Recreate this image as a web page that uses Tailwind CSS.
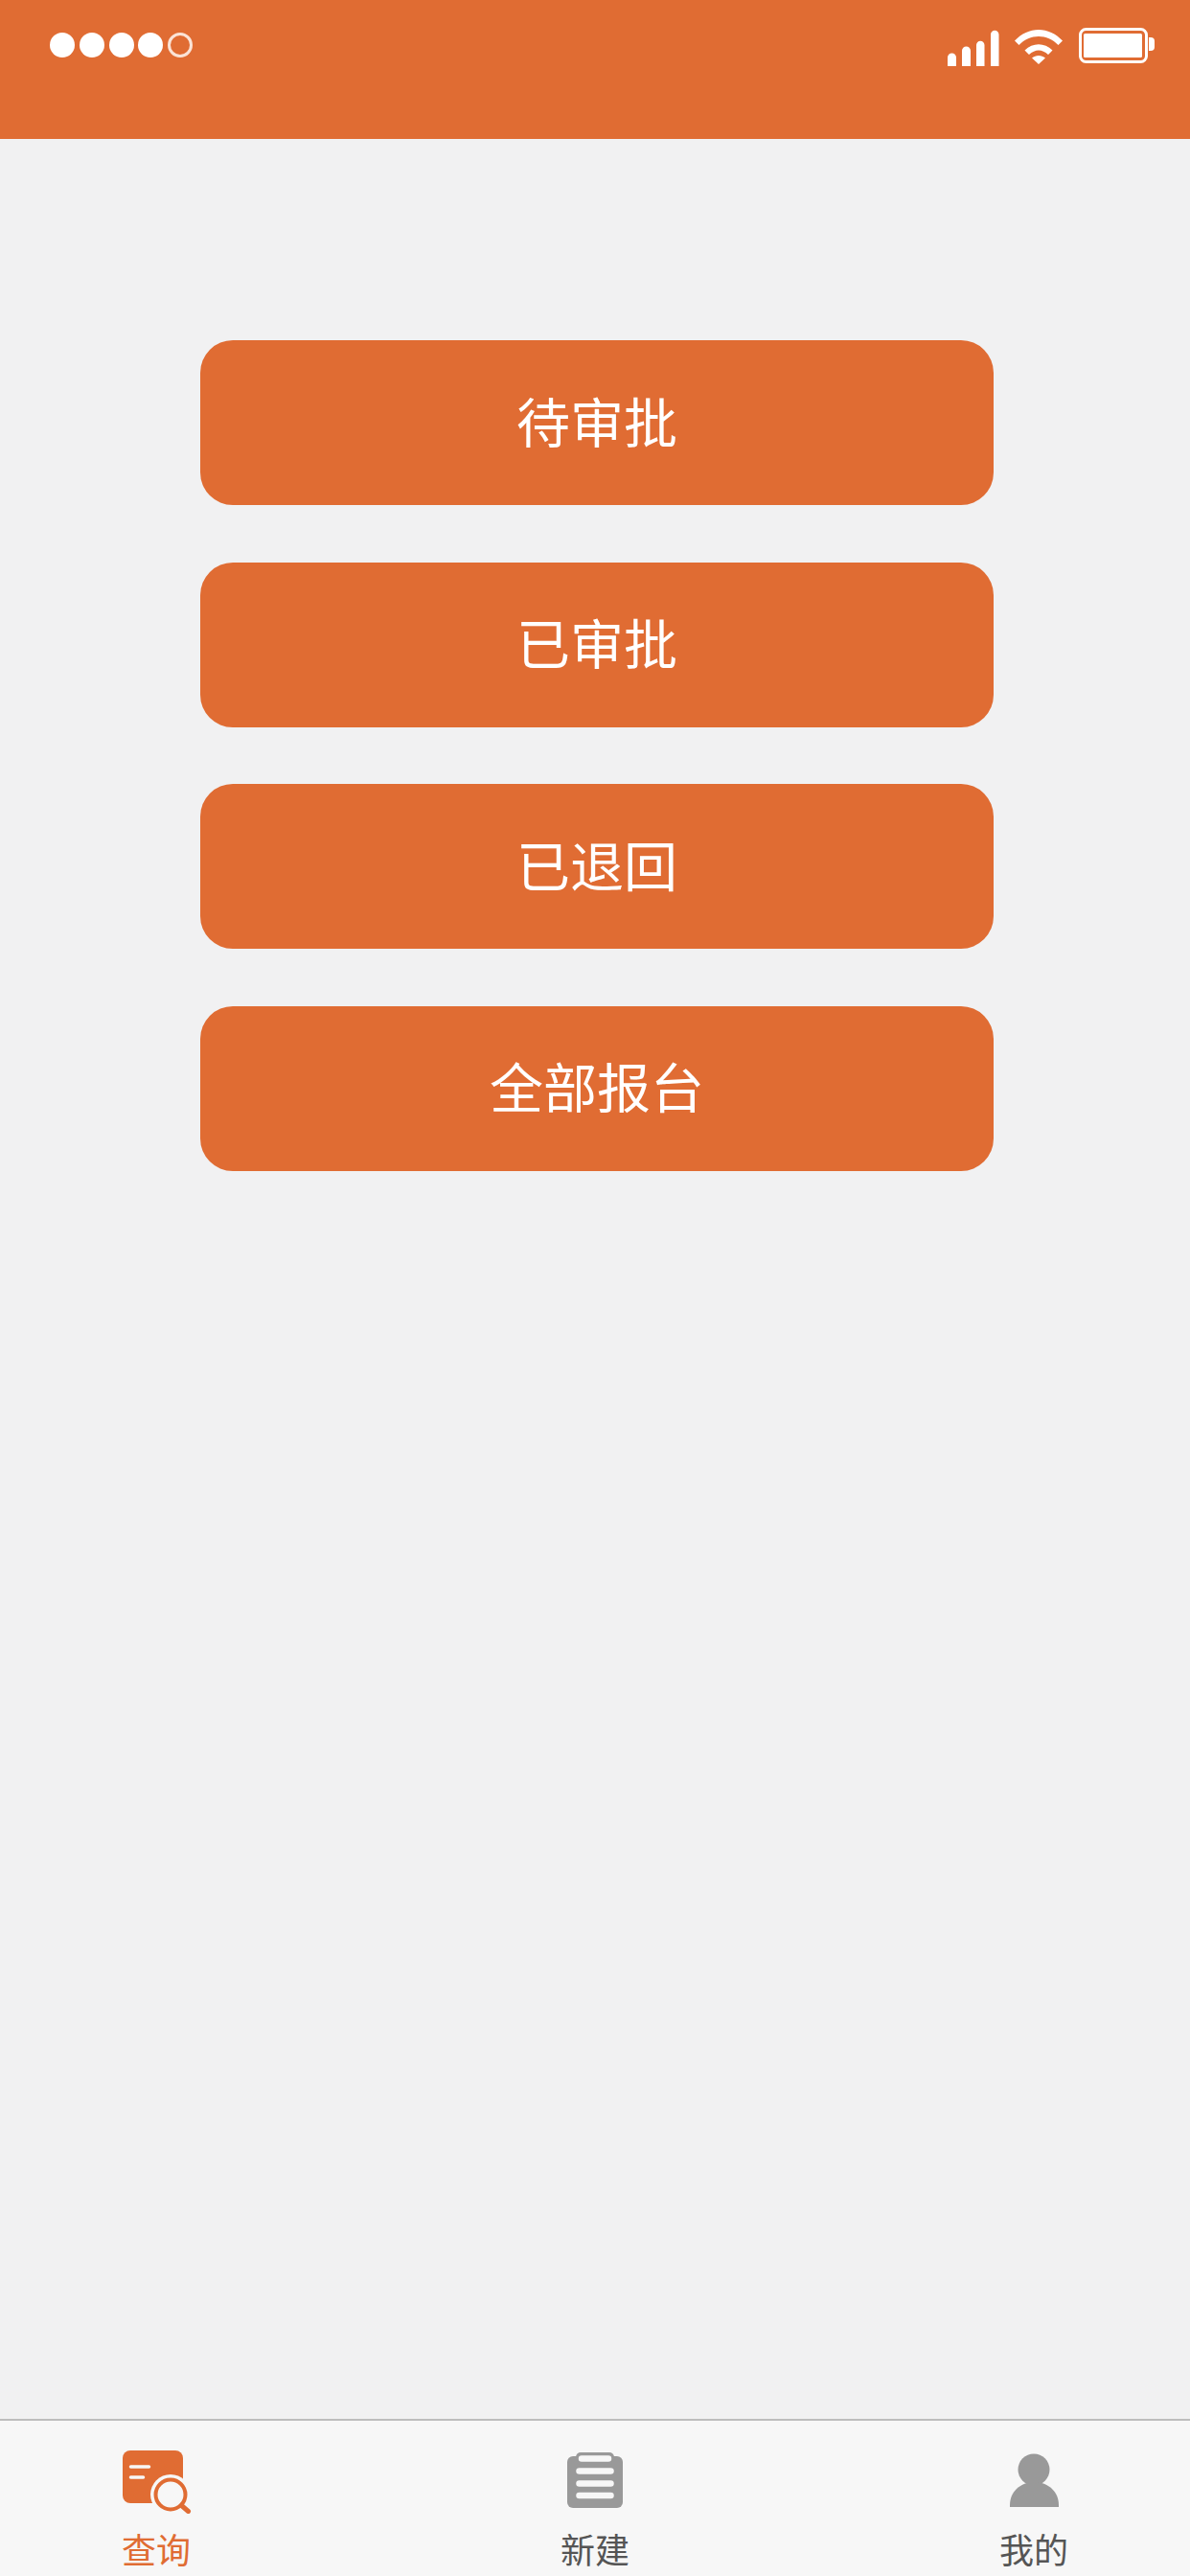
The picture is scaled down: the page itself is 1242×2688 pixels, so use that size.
<!DOCTYPE html>
<html lang="zh">
<head>
<meta charset="utf-8">
<script src="https://cdn.jsdelivr.net/npm/@tailwindcss/browser@4"></script>
</head>
<body class="font-['Noto_Sans_CJK_SC','Liberation_Sans',sans-serif]">
<div class="w-[1242px] h-[2688px] flex flex-col bg-[#f1f1f2] overflow-hidden">
  <header class="h-[145px] shrink-0 bg-[#e06c33] flex justify-between items-start">
    <svg class="mt-[30px] ml-[50px]" width="155" height="34" viewBox="50 30 155 34" fill="#fff">
      <circle cx="65" cy="47" r="13"/><circle cx="96" cy="47" r="13"/><circle cx="127" cy="47" r="13"/><circle cx="157" cy="47" r="13"/>
      <circle cx="188" cy="47" r="11.5" fill="none" stroke="#fbe3d6" stroke-width="3"/>
    </svg>
    <svg class="mt-[25px] mr-[32px]" width="221" height="47" viewBox="989 25 221 47" fill="#fff">
      <path d="M989 69V60a4.500 4.500 0 0 1 9 0v9zM1004 69V53a4.500 4.500 0 0 1 9 0v16zM1019 69V47a4.250 4.250 0 0 1 8.500 0v22zM1034 69V36a4.250 4.250 0 0 1 8.500 0v33z"/>
      <path d="M1059 42.500C1073 27 1095 27 1109 42.500L1104.500 47C1093 35 1075 35 1063.500 47z"/>
      <path d="M1069.500 52.500C1078 44 1090 44 1098.500 52.500L1094 57C1087.500 51 1080.500 51 1074 57z"/>
      <path d="M1077 60.500C1081 57 1087 57 1091 60.500L1084 67z"/>
      <rect x="1127.500" y="30.500" width="69" height="34" rx="6" fill="none" stroke="#fff" stroke-width="3"/>
      <rect x="1131" y="35" width="61" height="25" rx="1.500"/>
      <path d="M1199 39h2a4 4 0 0 1 4 4v6a4 4 0 0 1-4 4h-2z"/>
    </svg>
  </header>
  <main class="flex-1 pt-[210px] flex flex-col items-start gap-[59.67px] pl-[209px]">
    <button class="w-[828px] h-[172px] shrink-0 rounded-[34px] bg-[#e06c33] text-white text-[56px] font-normal leading-none pb-[7px]">待审批</button>
    <button class="w-[828px] h-[172px] shrink-0 rounded-[34px] bg-[#e06c33] text-white text-[56px] font-normal leading-none pb-[7px]">已审批</button>
    <button class="w-[828px] h-[172px] shrink-0 rounded-[34px] bg-[#e06c33] text-white text-[56px] font-normal leading-none pb-[7px]">已退回</button>
    <button class="w-[828px] h-[172px] shrink-0 rounded-[34px] bg-[#e06c33] text-white text-[56px] font-normal leading-none pb-[7px]">全部报台</button>
  </main>
  <nav class="h-[164px] shrink-0 bg-[#f7f7f7] border-t-2 border-[#bdbdbd] pl-[113px] pr-[113px] flex justify-between items-start">
    <div class="w-[100px] flex flex-col items-center pt-[29px] text-[#e06c33]">
      <svg width="74" height="68" viewBox="126 2555 74 68">
        <path d="M136 2557h47a8 8 0 0 1 8 8v47h-55a8 8 0 0 1-8-8v-39a8 8 0 0 1 8-8z" fill="#e06c33"/>
        <circle cx="178" cy="2603" r="21" fill="#f7f7f7"/>
        <rect x="191" y="2560" width="9" height="20" fill="#f7f7f7"/>
        <circle cx="178" cy="2603" r="15.500" fill="none" stroke="#e06c33" stroke-width="4"/>
        <path d="M189.500 2614.500l7 6" fill="none" stroke="#e06c33" stroke-width="5" stroke-linecap="round"/>
        <path d="M136.500 2574h19M136.500 2585h13" fill="none" stroke="#f7f7f7" stroke-width="3.500" stroke-linecap="round"/>
      </svg>
      <span class="mt-[11px] text-[36px] leading-[50px] whitespace-nowrap">查询</span>
    </div>
    <div class="w-[100px] flex flex-col items-center pt-[29px] text-[#555555]">
      <svg width="74" height="68" viewBox="584 2555 74 68">
        <rect x="592" y="2563" width="58" height="54" rx="6" fill="#999999"/>
        <rect x="601" y="2559" width="40" height="13" rx="5" fill="#999999"/>
        <path d="M607 2565.500h28M604.500 2578.500h33M604.500 2591.500h33M604.500 2604h33" fill="none" stroke="#f7f7f7" stroke-width="6.500" stroke-linecap="round"/>
      </svg>
      <span class="mt-[11px] text-[36px] leading-[50px] whitespace-nowrap">新建</span>
    </div>
    <div class="w-[100px] flex flex-col items-center pt-[29px] text-[#555555]">
      <svg width="74" height="68" viewBox="1040 2555 74 68">
        <circle cx="1077" cy="2577" r="16.500" fill="#999999"/>
        <path d="M1052 2616v-2c0-14 11-24 25.500-24s25.500 10 25.500 24v2z" fill="#999999"/>
      </svg>
      <span class="mt-[11px] text-[36px] leading-[50px] whitespace-nowrap">我的</span>
    </div>
  </nav>
</div>
</body>
</html>
